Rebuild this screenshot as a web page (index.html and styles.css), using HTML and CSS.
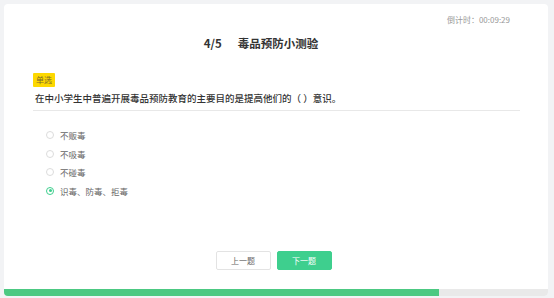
FILE: index.html
```html
<!DOCTYPE html>
<html lang="zh-CN">
<head>
  <meta charset="UTF-8" />
  <meta name="viewport" content="width=device-width, initial-scale=1.0"/>
  <title>毒品预防小测验</title>
  <link rel="stylesheet" href="styles.css">
</head>
<body>
  <div class="card">
    <div class="timer">倒计时：00:09:29</div>

    <div class="title">
      <span class="count">4/5</span>
      <span>毒品预防小测验</span>
    </div>

    <section class="question">
      <span class="tag">单选</span>
      <p class="stem">在中小学生中普遍开展毒品预防教育的主要目的是提高他们的（ ）意识。</p>

      <ul class="options">
        <li class="option"><span class="radio"></span>不贩毒</li>
        <li class="option"><span class="radio"></span>不吸毒</li>
        <li class="option"><span class="radio"></span>不碰毒</li>
        <li class="option checked"><span class="radio"></span>识毒、防毒、拒毒</li>
      </ul>
    </section>

    <div class="actions">
      <button class="btn">上一题</button>
      <button class="btn primary">下一题</button>
    </div>

    <div class="progress">
      <div class="progress-fill" style="width: 80%"></div>
    </div>
  </div>
</body>
</html>
```

FILE: styles.css
```css
body {
  margin: 0;
  padding: 0;
  background: #f2f3f5;
  font-family: "Noto Sans CJK SC", "Noto Sans", sans-serif;
  color: #333;
}

.card {
  margin: 4px 6px 0 4px;
  height: 292px;
  background: #fff;
  border-radius: 4px;
  display: flex;
  flex-direction: column;
  overflow: hidden;
}

.timer {
  padding: 10px 38px 0 0;
  text-align: right;
  font-size: 8px;
  line-height: 12px;
  color: #999;
}

.title {
  margin-top: 9px;
  padding-right: 30px;
  display: flex;
  justify-content: center;
  gap: 16px;
  font-size: 11.5px;
  line-height: 16px;
  font-weight: bold;
  color: #333;
}

.question {
  margin-top: 22px;
  padding: 0 28px 0 29px;
}

.tag {
  display: block;
  width: fit-content;
  height: 14px;
  line-height: 14px;
  padding: 0 3px;
  background: #fdd800;
  color: #7a6a2a;
  font-size: 8px;
  border-radius: 1px;
}

.stem {
  margin: 4px 0 0;
  padding: 0 0 5px 2px;
  font-size: 9.5px;
  line-height: 14px;
  font-weight: 500;
  color: #333;
  border-bottom: 1px solid #e8e8e8;
}

.options {
  list-style: none;
  margin: 15px 0 0;
  padding: 0 0 0 13px;
}

.option {
  display: flex;
  align-items: center;
  gap: 6px;
  height: 18.5px;
  font-size: 8.5px;
  color: #666;
}

.radio {
  box-sizing: border-box;
  width: 8px;
  height: 8px;
  border: 1px solid #dcdcdc;
  border-radius: 50%;
  display: flex;
  align-items: center;
  justify-content: center;
}

.option.checked .radio {
  border-color: #3ecf8e;
}

.option.checked .radio::after {
  content: "";
  width: 3px;
  height: 3px;
  border-radius: 50%;
  background: #3ecf8e;
}

.actions {
  margin-top: auto;
  margin-bottom: 19px;
  padding-right: 5px;
  display: flex;
  justify-content: center;
  gap: 6px;
}

.btn {
  width: 55px;
  height: 19px;
  padding: 0;
  border: 1px solid #e3e3e3;
  border-radius: 2px;
  background: #fff;
  color: #666;
  font-family: inherit;
  font-size: 8px;
  cursor: pointer;
}

.btn.primary {
  background: #3ecf8e;
  border-color: #3ecf8e;
  color: #fff;
}

.progress {
  height: 7px;
  background: #e9e9e9;
}

.progress-fill {
  height: 100%;
  background: #4cc982;
}
```
